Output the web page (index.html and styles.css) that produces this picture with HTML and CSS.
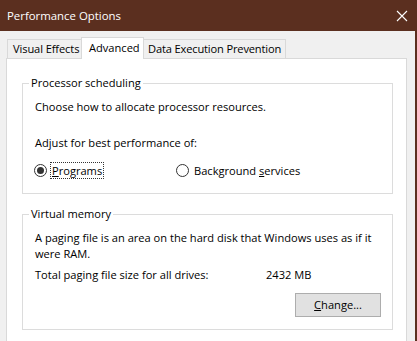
FILE: index.html
```html
<!DOCTYPE html>
<html>
<head>
<meta charset="utf-8">
<link rel="stylesheet" href="styles.css">
</head>
<body>
<div class="window">
  <div class="titlebar">
    <span class="title">Performance Options</span>
    <svg class="close" width="12" height="12" viewBox="0 0 12 12"><path d="M1 1 L11 11 M11 1 L1 11" stroke="#fff" stroke-width="1.1" fill="none"/></svg>
  </div>
  <div class="client">
    <div class="main">
      <div class="tabs">
        <div class="tab tab-ve">Visual Effects</div>
        <div class="tab tab-adv active">Advanced</div>
        <div class="tab tab-dep">Data Execution Prevention</div>
      </div>
      <div class="panel">
        <fieldset class="group group-cpu">
          <legend>Processor scheduling</legend>
          <div class="inner">
            <div class="line">Choose how to allocate processor resources.</div>
            <div class="line gap-adjust">Adjust for best performance of:</div>
            <div class="radios">
              <div class="opt opt-first"><span class="radio checked"></span><span class="lbl focus"><u>P</u>rograms</span></div>
              <div class="opt"><span class="radio"></span><span class="lbl">Background <u>s</u>ervices</span></div>
            </div>
          </div>
        </fieldset>
        <fieldset class="group group-vm">
          <legend>Virtual memory</legend>
          <div class="inner">
            <div class="line">A paging file is an area on the hard disk that Windows uses as if it</div>
            <div class="line">were RAM.</div>
            <div class="line total"><span class="total-label">Total paging file size for all drives:</span><span>2432 MB</span></div>
            <div class="btnrow"><div class="button"><u>C</u>hange...</div></div>
          </div>
        </fieldset>
      </div>
    </div>
    <div class="frame-right"></div>
  </div>
</div>
</body>
</html>
```
FILE: styles.css
```css
* { box-sizing: border-box; }
html, body { margin: 0; padding: 0; }
body {
  background: #f0f0f0;
  font-family: "Open Sans", "Noto Sans", "DejaVu Sans", sans-serif;
  font-size: 11.1px;
  color: #000;
  overflow: hidden;
}
.window { width: 417px; height: 341px; display: flex; flex-direction: column; overflow: hidden; }
.titlebar {
  height: 31px;
  background: #5b2f1f;
  color: #fff;
  display: flex;
  align-items: center;
  padding-left: 7px;
  padding-right: 9px;
  font-size: 11.4px;
}
.title { flex: 1; }
.close { display: block; }
.client { flex: 1; display: flex; }
.main { flex: 1; padding: 6px 8px 0 6px; display: flex; flex-direction: column; }
.frame-right { width: 2px; background: #5b2f1f; }
.tabs { display: flex; align-items: flex-end; padding-left: 1px; height: 21px; position: relative; z-index: 1; }
.tab {
  height: 19px;
  border: 1px solid #d9d9d9;
  border-bottom: none;
  background: #f0f0f0;
  line-height: 17px;
  padding: 0 4px 0 5px;
  white-space: nowrap;
}
.tab-ve { width: 74px; border-right: none; letter-spacing: -0.1px; }
.tab-adv { width: 63px; }
.tab-dep { border-left: none; padding: 0 4px 0 4px; letter-spacing: -0.15px; }
.tab.active {
  height: 22px;
  margin-bottom: -1px;
  background: #fff;
  line-height: 19px;
  padding-left: 7px;
}
.panel {
  flex: 1;
  background: #fff;
  border: 1px solid #d9d9d9;
  border-bottom: none;
  padding: 16px 13px 0 15px;
}
.group {
  margin: 0;
  padding: 0;
  border: 1px solid #dcdcdc;
  min-width: 0;
}
.group legend {
  margin-left: 6px;
  padding: 0 2px;
  line-height: 16px;
}
.group-vm { margin-top: 12px; }
.inner { padding: 8px 11px 0 12px; }
.group-cpu .inner { padding-bottom: 15px; }
.group-vm .inner { padding-bottom: 12px; }
.line { line-height: 16px; white-space: nowrap; }
.gap-adjust { margin-top: 20px; }
.radios { display: flex; margin-top: 11px; height: 16px; align-items: center; margin-left: -1px; }
.opt { display: flex; align-items: center; }
.opt-first { width: 142px; }
.radio {
  width: 13px; height: 13px;
  border: 1px solid #333;
  border-radius: 50%;
  background: #fff;
  display: flex; align-items: center; justify-content: center;
  margin-right: 3px;
}
.radio.checked::after {
  content: "";
  width: 7px; height: 7px; border-radius: 50%;
  background: #333;
}
.lbl { line-height: 15px; padding: 0 1px; border: 1px dotted transparent; }
.lbl.focus { border-color: #333; }
.total { margin-top: 5px; display: flex; }
.total-label { width: 231px; }
.btnrow { display: flex; justify-content: flex-end; margin-top: 10px; }
.button {
  width: 86px; height: 24px;
  background: #e1e1e1;
  border: 1px solid #adadad;
  text-align: center;
  line-height: 22px;
}
```
